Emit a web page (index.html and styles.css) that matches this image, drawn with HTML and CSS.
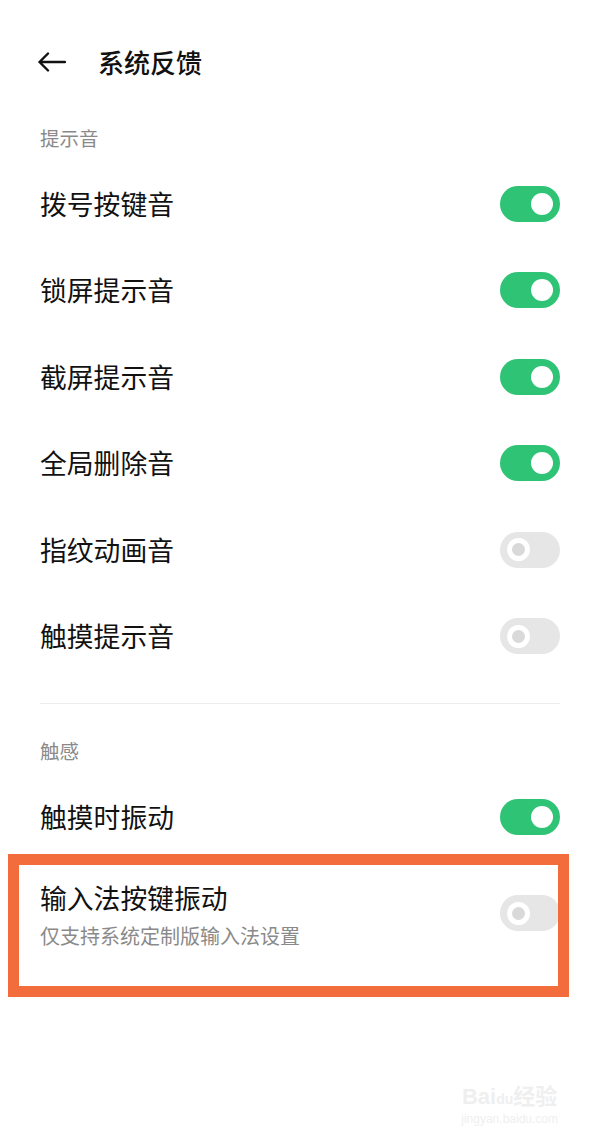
FILE: index.html
```html
<!DOCTYPE html>
<html lang="zh-CN">
  <head>
    <meta charset="UTF-8" />
    <meta name="viewport" content="width=device-width, initial-scale=1.0" />
    <title>系统反馈</title>
    <link rel="stylesheet" href="styles.css">
  </head>
  <body>
    <div class="page">
      <div class="header">
        <svg class="back" width="28" height="20" viewBox="0 0 28 20">
          <path d="M27 10H1.5M10 1.5L1.5 10L10 18.5" fill="none" stroke="#111" stroke-width="2.4" stroke-linecap="round" stroke-linejoin="round" />
        </svg>
        <h1 class="title">系统反馈</h1>
      </div>

      <div class="section-title">提示音</div>
      <div class="list">
        <div class="row">
          <span class="label">拨号按键音</span>
          <span class="switch on"><span class="knob"></span></span>
        </div>
        <div class="row">
          <span class="label">锁屏提示音</span>
          <span class="switch on"><span class="knob"></span></span>
        </div>
        <div class="row">
          <span class="label">截屏提示音</span>
          <span class="switch on"><span class="knob"></span></span>
        </div>
        <div class="row">
          <span class="label">全局删除音</span>
          <span class="switch on"><span class="knob"></span></span>
        </div>
        <div class="row">
          <span class="label">指纹动画音</span>
          <span class="switch"><span class="knob"></span></span>
        </div>
        <div class="row">
          <span class="label">触摸提示音</span>
          <span class="switch"><span class="knob"></span></span>
        </div>
      </div>

      <div class="divider"></div>

      <div class="section-title second">触感</div>
      <div class="list tight">
        <div class="row">
          <span class="label">触摸时振动</span>
          <span class="switch on"><span class="knob"></span></span>
        </div>
        <div class="row row-tall">
          <div class="text">
            <div class="label">输入法按键振动</div>
            <div class="summary">仅支持系统定制版输入法设置</div>
          </div>
          <span class="switch"><span class="knob"></span></span>
          <div class="highlight"></div>
        </div>
      </div>

      <div class="watermark">
        <div class="wm-logo">Bai<span class="wm-paw">du</span>经验</div>
        <div class="wm-url">jingyan.baidu.com</div>
      </div>
    </div>
  </body>
</html>
```

FILE: styles.css
```css
:root {
  --green: #2fc376;
  --text: #111111;
  --muted: #8a8a8a;
  --track-off: #e6e6e6;
  --mark: #f26c3c;
}

* {
  box-sizing: border-box;
  margin: 0;
  padding: 0;
}

body {
  font-family: "Noto Sans CJK SC", "Noto Sans", sans-serif;
  background: #ffffff;
  color: var(--text);
}

.page {
  position: relative;
  width: 600px;
  height: 1143px;
  overflow: hidden;
}

.header {
  height: 124px;
  display: flex;
  align-items: center;
  gap: 32px;
  padding: 0 40px 0 38px;
}

.back {
  display: block;
}

.title {
  font-size: 26px;
  font-weight: 500;
  line-height: 1;
}

.section-title {
  padding: 0 40px;
  height: 28px;
  line-height: 28px;
  font-size: 19.5px;
  color: var(--muted);
}

.section-title.second {
  margin-top: 33px;
}

.list {
  margin-top: 8.5px;
}

.list.tight {
  margin-top: 9.5px;
}

.row {
  position: relative;
  height: 86.5px;
  display: flex;
  align-items: center;
  justify-content: space-between;
  padding: 0 40px;
}

.label {
  font-size: 26.8px;
  line-height: 30px;
  color: var(--text);
}

.row-tall {
  height: 130px;
  align-items: flex-start;
  padding-top: 22.75px;
}

.row-tall .switch {
  margin-top: 12px;
}

.summary {
  margin-top: 10px;
  font-size: 20px;
  line-height: 26px;
  color: var(--muted);
}

.switch {
  position: relative;
  flex: none;
  width: 60px;
  height: 36px;
  border-radius: 18px;
  background: var(--track-off);
}

.switch .knob {
  position: absolute;
  top: 6.5px;
  left: 6.5px;
  width: 23px;
  height: 23px;
  border-radius: 50%;
  border: 5.5px solid #ffffff;
  background: #d9d9d9;
}

.switch.on {
  background: var(--green);
}

.switch.on .knob {
  top: 7px;
  left: auto;
  right: 7px;
  width: 22px;
  height: 22px;
  border: none;
  background: #ffffff;
}

.divider {
  height: 1px;
  margin: 23px 40px 0;
  background: #ececec;
}

.highlight {
  position: absolute;
  top: -6.25px;
  left: 8px;
  width: 561px;
  height: 143px;
  border: 11px solid var(--mark);
}

.watermark {
  position: absolute;
  right: 42px;
  bottom: 16px;
  text-align: center;
  color: #efefef;
  font-family: "Liberation Sans", "Noto Sans CJK SC", sans-serif;
}

.wm-logo {
  font-size: 22px;
  font-weight: 700;
  line-height: 24px;
}

.wm-paw {
  font-size: 14px;
}

.wm-url {
  font-size: 12px;
  line-height: 16px;
}
```
